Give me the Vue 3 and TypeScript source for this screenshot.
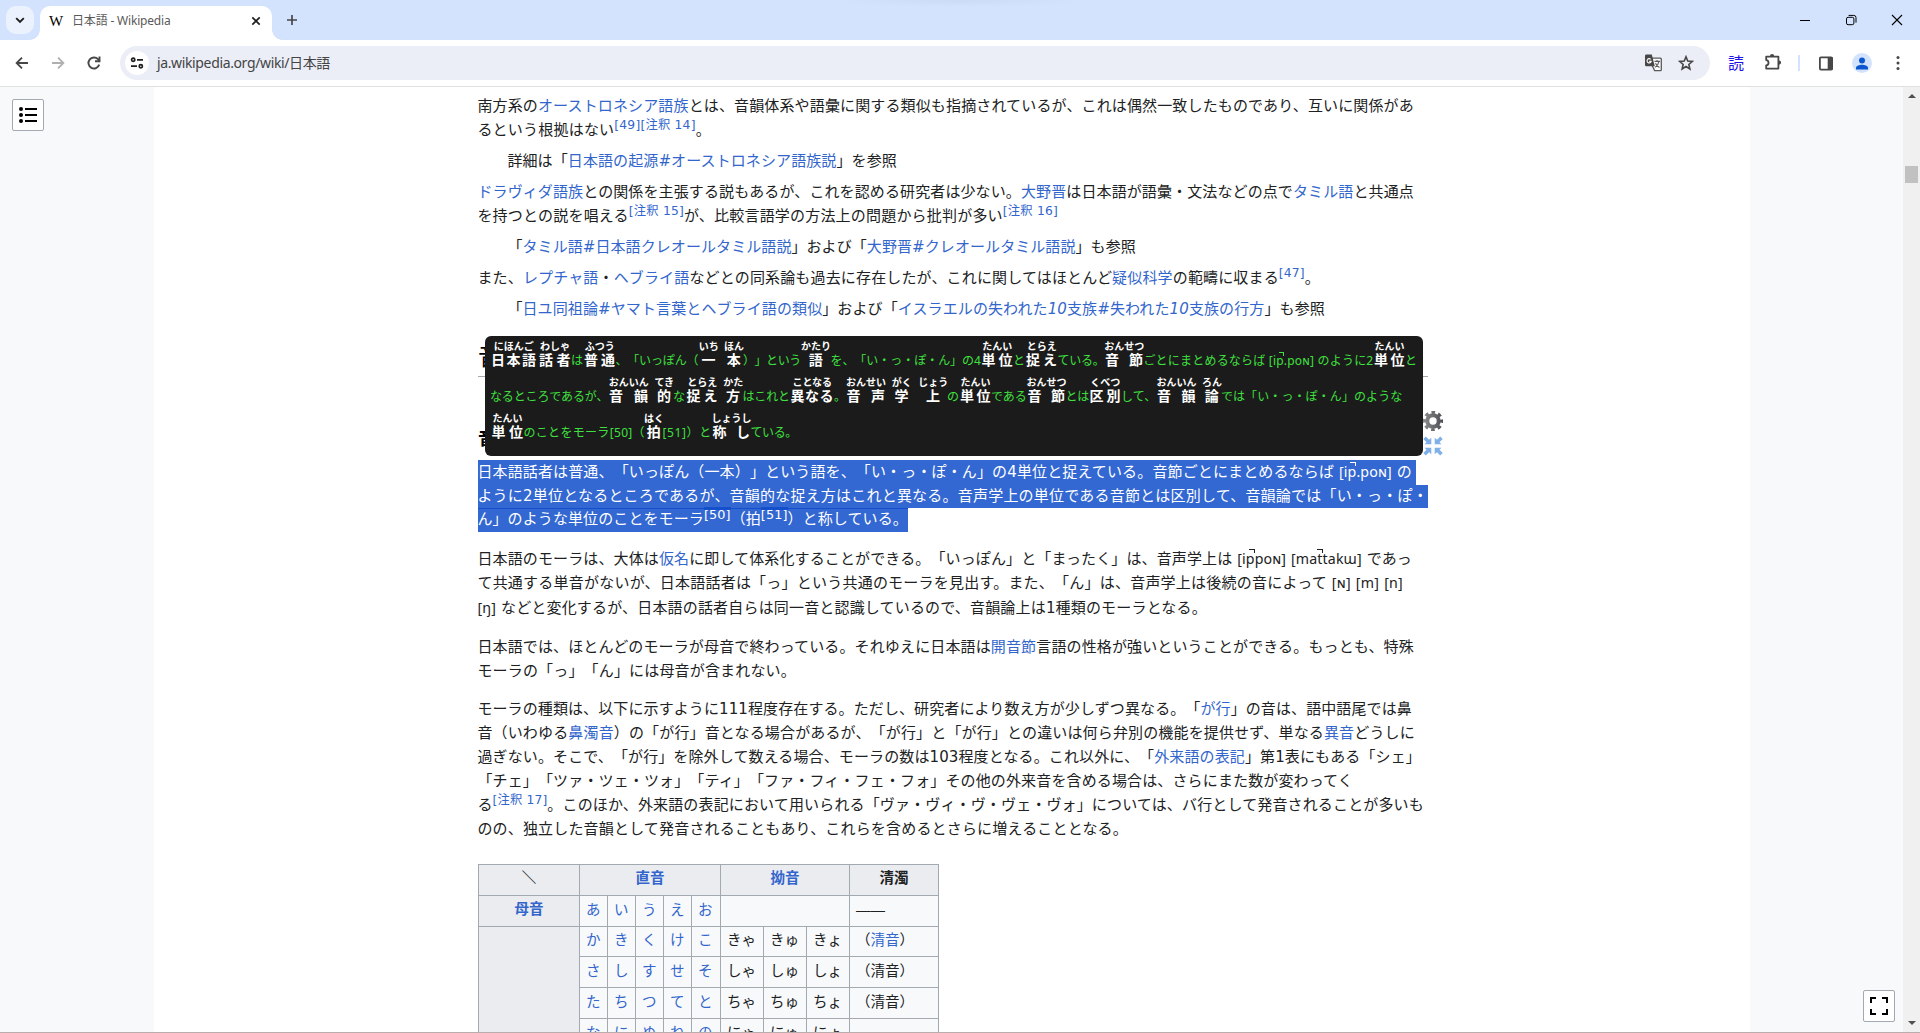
<script setup lang="ts">
import { nextTick } from 'vue'

interface Seg { kind: 'text' | 'link' | 'sup' | 'ipa'; text: string }
interface Line { w: number; segs: Seg[] }
interface Block { cls: string; lh: number; mt: number; lines: Line[] }
interface Cell { w: number; base: string; rt?: string }

/* ‹link›  ⟪superscript reference⟫  {phonetic} */
function parse(src: string): Seg[] {
  return src.split(/(‹.*?›|⟪.*?⟫|\{.*?\})/).filter(Boolean).map((t) => {
    const inner = t.slice(1, -1)
    if (t[0] === '‹') return { kind: 'link', text: inner }
    if (t[0] === '⟪') return { kind: 'sup', text: inner }
    if (t[0] === '{') return { kind: 'ipa', text: inner }
    return { kind: 'text', text: t }
  })
}
const block = (cls: string, lh: number, mt: number, ...lines: [number, string][]): Block => ({
  cls, lh, mt, lines: lines.map(([w, s]) => ({ w, segs: parse(s) })),
})
const slant = (s: string) => s.split(/([#0-9]+)/).filter(Boolean)
/* a tilde marks where the unreleased-stop corner sits over the preceding letter */
const ipa = (s: string) => s.split(/(~)/).filter(Boolean)

const upper: Block[] = [
  block('para', 24, 0,
    [936, '南方系の‹オーストロネシア語族›とは、音韻体系や語彙に関する類似も指摘されているが、これは偶然一致したものであり、互いに関係があ'],
    [233, 'るという根拠はない⟪[49]⟫⟪[注釈 14]⟫。']),
  block('hat', 24, 7, [389, '詳細は「‹日本語の起源#オーストロネシア語族説›」を参照']),
  block('para', 24, 7.4,
    [936, '‹ドラヴィダ語族›との関係を主張する説もあるが、これを認める研究者は少ない。‹大野晋›は日本語が語彙・文法などの点で‹タミル語›と共通点'],
    [580, 'を持つとの説を唱える⟪[注釈 15]⟫が、比較言語学の方法上の問題から批判が多い⟪[注釈 16]⟫']),
  block('hat', 24, 6.6, [628, '「‹タミル語#日本語クレオールタミル語説›」および「‹大野晋#クレオールタミル語説›」も参照']),
  block('para', 24, 7.2, [842, 'また、‹レプチャ語›・‹ヘブライ語›などとの同系論も過去に存在したが、これに関してはほとんど‹疑似科学›の範疇に収まる⟪[47]⟫。']),
  block('hat', 24, 7.5, [817, '「‹日ユ同祖論#ヤマト言葉とヘブライ語の類似›」および「‹イスラエルの失われた10支族#失われた10支族の行方›」も参照']),
]

const selected: { h: number; box: number; line: Line }[] = [
  { h: 25, box: 938, line: { w: 934, segs: parse('日本語話者は普通、「いっぽん（一本）」という語を、「い・っ・ぽ・ん」の4単位と捉えている。音節ごとにまとめるならば {[ip~.poɴ]} の') } },
  { h: 23, box: 950, line: { w: 950, segs: parse('ように2単位となるところであるが、音韻的な捉え方はこれと異なる。音声学上の単位である音節とは区別して、音韻論では「い・っ・ぽ・') } },
  { h: 24, box: 430, line: { w: 430, segs: parse('ん」のような単位のことをモーラ⟪[50]⟫（拍⟪[51]⟫）と称している。') } },
]

const lower: Block[] = [
  block('para', 24.85, 14.6,
    [934, '日本語のモーラは、大体は‹仮名›に即して体系化することができる。「いっぽん」と「まったく」は、音声学上は {[ip~poɴ]} {[mat~takɯ]} であっ'],
    [925, 'て共通する単音がないが、日本語話者は「っ」という共通のモーラを見出す。また、「ん」は、音声学上は後続の音によって {[ɴ]} {[m]} {[n]}'],
    [729, '{[ŋ]} などと変化するが、日本語の話者自らは同一音と認識しているので、音韻論上は1種類のモーラとなる。']),
  block('para', 24, 13.6,
    [936, '日本語では、ほとんどのモーラが母音で終わっている。それゆえに日本語は‹開音節›言語の性格が強いということができる。もっとも、特殊'],
    [318, 'モーラの「っ」「ん」には母音が含まれない。']),
  block('para', 23.88, 15.6,
    [934, 'モーラの種類は、以下に示すように111程度存在する。ただし、研究者により数え方が少しずつ異なる。「‹が行›」の音は、語中語尾では鼻'],
    [937, '音（いわゆる‹鼻濁音›）の「が行」音となる場合があるが、「が行」と「が行」との違いは何ら弁別の機能を提供せず、単なる‹異音›どうしに'],
    [943, '過ぎない。そこで、「が行」を除外して数える場合、モーラの数は103程度となる。これ以外に、「‹外来語の表記›」第1表にもある「シェ」'],
    [875, '「チェ」「ツァ・ツェ・ツォ」「ティ」「ファ・フィ・フェ・フォ」その他の外来音を含める場合は、さらにまた数が変わってく'],
    [946, 'る⟪[注釈 17]⟫。このほか、外来語の表記において用いられる「ヴァ・ヴィ・ヴ・ヴェ・ヴォ」については、バ行として発音されることが多いも'],
    [650, 'のの、独立した音韻として発音されることもあり、これらを含めるとさらに増えることとなる。']),
]

/* furigana rows: [start, end, base, reading?] measured along the row */
const row = (...c: [number, number, string, string?][]): Cell[] => {
  const out: Cell[] = []
  let x = 490.5
  for (const [a, b, base, rt] of c) {
    if (a > x) out.push({ w: a - x, base: '' })
    out.push({ w: b - a, base, rt })
    x = b
  }
  return out
}
const furigana: Cell[][] = [
  row([490.5, 537, '日本語', 'にほんご'], [538.5, 571.5, '話者', 'わしゃ'], [571.5, 583.5, 'は'], [583.5, 616, '普通', 'ふつう'],
    [616, 698.5, '、「いっぽん（'], [698.5, 719, '一', 'いち'], [724.5, 743.5, '本', 'ほん'], [743.5, 801, '）」という'],
    [801, 831, '語', 'かたり'], [831, 981, 'を、「い・っ・ぽ・ん」の4'], [981, 1013.5, '単位', 'たんい'], [1013.5, 1025.5, 'と'],
    [1025.5, 1058, '捉え', 'とらえ'], [1058, 1104.5, 'ている。'], [1104.5, 1144, '音節', 'おんせつ'],
    [1144, 1373.5, 'ごとにまとめるならば [ip~.poɴ] のように2'], [1373.5, 1405.5, '単位', 'たんい'], [1405.5, 1418, 'と']),
  row([490.5, 608.5, 'なるところであるが、'], [608.5, 649, '音韻', 'おんいん'], [655, 673.5, '的', 'てき'], [673.5, 685.5, 'な'],
    [686, 718.5, '捉え', 'とらえ'], [723.5, 743, '方', 'かた'], [743, 790, 'はこれと'], [790, 834.5, '異なる', 'ことなる'],
    [834.5, 846, '。'], [846, 886, '音声', 'おんせい'], [892, 911.5, '学', 'がく'], [919, 947.5, '上', 'じょう'], [947.5, 959.5, 'の'],
    [959.5, 991.5, '単位', 'たんい'], [991.5, 1027, 'である'], [1027, 1066, '音節', 'おんせつ'], [1066, 1089, 'とは'],
    [1089, 1121.5, '区別', 'くべつ'], [1121.5, 1156.5, 'して、'], [1156.5, 1196.5, '音韻', 'おんいん'], [1202.5, 1221.5, '論', 'ろん'],
    [1221.5, 1402.5, 'では「い・っ・ぽ・ん」のような']),
  row([491, 524, '単位', 'たんい'], [524, 645, 'のことをモーラ[50]（'], [645, 663, '拍', 'はく'], [663, 712, '[51]）と'],
    [712, 751, '称し', 'しょうし'], [751, 797, 'ている。']),
]

const kana = [
  ['かきくけこ', 'きゃ', 'きゅ', 'きょ'],
  ['さしすせそ', 'しゃ', 'しゅ', 'しょ'],
  ['たちつてと', 'ちゃ', 'ちゅ', 'ちょ'],
  ['なにぬねの', 'にゃ', 'にゅ', 'にょ'],
]
const cols = [101, 28, 28, 28, 28, 29, 43, 43, 43, 89]

/* spreads the run over its measure by adjusting the tracking */
const vFit = {
  mounted(el: HTMLElement, b: { value: number }) {
    nextTick(() => {
      const n = Array.from(el.textContent ?? '').length
      const natural = el.getBoundingClientRect().width
      if (n) el.style.letterSpacing = `${(b.value + 0.5 - natural) / n}px`
    })
  },
}
</script>

<template>
  <div class="window">
    <header class="tabs">
      <div class="search-tabs"><svg width="12" height="12" viewBox="0 0 12 12"><path d="M2.2 4.2 6 8l3.8-3.8" fill="none" stroke="#1f1f1f" stroke-width="1.9" /></svg></div>
      <div class="tab">
        <span class="fav">W</span>
        <span class="tab-title"><span v-fit="98" class="fit">日本語 - Wikipedia</span></span>
        <svg class="tab-x" width="10" height="10" viewBox="0 0 10 10"><path d="M1.3 1.3l7.4 7.4M8.7 1.3 1.3 8.7" stroke="#1f1f1f" stroke-width="1.7" /></svg>
      </div>
      <svg class="plus" width="12" height="12" viewBox="0 0 12 12"><path d="M6 1v10M1 6h10" stroke="#474747" stroke-width="1.7" /></svg>
      <div class="controls">
        <svg width="12" height="12" viewBox="0 0 12 12"><path d="M1 6.5h10" stroke="#000" /></svg>
        <svg width="12" height="12" viewBox="0 0 12 12" fill="none" stroke="#000"><rect x="1.5" y="3.3" width="7.4" height="7.4" rx="1.6" /><path d="M3.6 1.4h5.2a2.2 2.2 0 0 1 2.2 2.2v5" /></svg>
        <svg width="12" height="12" viewBox="0 0 12 12"><path d="M1 1l10 10M11 1 1 11" stroke="#000" stroke-width="1.1" /></svg>
      </div>
    </header>

    <div class="toolbar">
      <svg class="nav back" width="16" height="16" viewBox="0 0 16 16" fill="none" stroke="#474747" stroke-width="1.8"><path d="M14 8H3M8 2.6 2.6 8 8 13.4" /></svg>
      <svg class="nav fwd" width="16" height="16" viewBox="0 0 16 16" fill="none" stroke="#b0b0b0" stroke-width="1.8"><path d="M2 8h11M8 2.6 13.4 8 8 13.4" /></svg>
      <svg class="nav reload" width="16" height="16" viewBox="0 0 16 16" fill="none" stroke="#474747" stroke-width="1.9"><path d="M13.2 9.6A5.5 5.5 0 1 1 12 4.2l1.6 1.7" /><path d="M13.5 1.6v4.6H9" /></svg>
      <div class="omnibox">
        <div class="site">
          <svg width="14" height="14" viewBox="0 0 14 14" fill="none" stroke="#1f1f1f" stroke-width="1.7"><circle cx="3.2" cy="3.8" r="1.6" /><path d="M7 3.8h6M1 10.2h6" /><circle cx="10.8" cy="10.2" r="1.6" /></svg>
        </div>
        <span class="url"><span v-fit="172.5" class="fit">ja.wikipedia.org/wiki/日本語</span></span>
        <svg class="translate" width="17" height="18" viewBox="0 0 17 18"><path d="M6.8 4.200h8.600c.5 0 .9.4.9.9v10.600c0 .5-.4.9-.9.9H9.600L7.400 12" fill="#fbfbfd" stroke="#5a5a5a" stroke-width="1.300" /><path d="M1.200.6h5.600l3 11.600H1.200A1.200 1.200 0 0 1 0 11V1.800A1.200 1.200 0 0 1 1.200.6z" fill="#474747" /><path d="M5.700 5.300A2.100 2.100 0 1 0 6.200 7.400H4.200" fill="none" stroke="#fff" stroke-width="1.100" /><path d="M9.500 7.400h5.500M12 6v1.400M10.500 9.200c.8 2 2 3.400 4 4.300M14 7.400c-.6 3-2 4.800-4 6" fill="none" stroke="#5a5a5a" stroke-width="1.100" /></svg>
        <svg class="star" width="16" height="16" viewBox="0 0 16 16"><path d="M8 1.800l1.750 4.250 4.550.4-3.450 3 1.050 4.500L8 11.550 4.100 13.950l1.050-4.500-3.450-3 4.550-.4z" fill="none" stroke="#474747" stroke-width="1.600" /></svg>
      </div>
      <span class="yomi">読</span>
      <svg class="puzzle" width="18" height="18" viewBox="0 0 18 18"><path d="M2.200 3.600h12.200v12H2.200v-3.300c3.100-.2 3.100-5 0-5.200z" fill="none" stroke="#474747" stroke-width="1.800" stroke-linejoin="round" /><path d="M6 3a2.100 2.100 0 0 1 4.200 0zM15 7.500a2.100 2.100 0 0 1 0 4.200z" fill="#474747" /></svg>
      <i class="sep"></i>
      <svg class="panel" width="14" height="15" viewBox="0 0 14 15"><rect x=".9" y="1.400" width="12.200" height="12.200" rx="1" fill="#fff" stroke="#474747" stroke-width="1.800" /><path d="M8.700 1h4.800v13H8.700z" fill="#474747" /></svg>
      <div class="avatar"><svg width="12" height="13" viewBox="0 0 12 13" fill="#0b57d0"><circle cx="6" cy="3.500" r="3" /><path d="M0 12.500v-1.700C0 8.700 3.500 7.700 6 7.700s6 1 6 3.100v1.700z" /></svg></div>
      <svg class="dots" width="4" height="16" viewBox="0 0 4 16" fill="#474747"><circle cx="2" cy="2.400" r="1.500" /><circle cx="2" cy="8" r="1.500" /><circle cx="2" cy="13.600" r="1.500" /></svg>
    </div>

    <div class="page">
      <aside class="side left">
        <div class="sq"><svg width="20" height="20" viewBox="0 0 20 20"><g fill="#000"><circle cx="3" cy="4" r="2" /><circle cx="3" cy="10" r="2" /><circle cx="3" cy="16" r="2" /><path d="M7 3h12v2H7zM7 9h12v2H7zM7 15h12v2H7z" /></g></svg></div>
      </aside>

      <main class="article">
        <div v-for="(b, i) in upper" :key="'u' + i" :class="b.cls" :style="{ marginTop: b.mt + 'px', lineHeight: b.lh + 'px' }">
          <div v-for="(l, j) in b.lines" :key="j" class="line" :style="{ height: b.lh + 'px' }"><span v-fit="l.w" class="fit"><template v-for="(s, k) in l.segs" :key="k"><a v-if="s.kind === 'link' && b.cls === 'hat'"><template v-for="(t, m) in slant(s.text)" :key="m"><em v-if="/[#0-9]/.test(t)">{{ t }}</em><template v-else>{{ t }}</template></template></a><a v-else-if="s.kind === 'link'">{{ s.text }}</a><sup v-else-if="s.kind === 'sup'">{{ s.text }}</sup><template v-else>{{ s.text }}</template></template></span></div>
        </div>

        <div class="heads">
          <h2>音</h2>
          <h3>音</h3>
          <div class="popup">
            <div v-for="(r, i) in furigana" :key="i" class="furi-row">
              <div v-for="(c, j) in r" :key="j" class="cell" :class="{ word: c.rt }" :style="{ width: c.w + 'px' }">
                <span class="rt">{{ c.rt }}</span>
                <span v-if="c.rt" class="base"><b v-for="(ch, k) in c.base" :key="k">{{ ch }}</b></span>
                <span v-else class="plain"><span v-fit="c.w" class="fit"><template v-for="(p, k) in ipa(c.base)" :key="k"><i v-if="p === '~'" class="corner"></i><template v-else>{{ p }}</template></template></span></span>
              </div>
            </div>
            <div class="tools">
              <svg width="20" height="20" viewBox="0 0 20 20"><defs><linearGradient id="g" gradientUnits="userSpaceOnUse" x1="0" x2="20" y1="0" y2="0"><stop offset="0" stop-color="#8c8c8c" /><stop offset="1" stop-color="#4c4f54" /></linearGradient></defs><g stroke="url(#g)" fill="none"><circle cx="10" cy="10" r="5.700" stroke-width="4" /><path stroke-width="3.600" stroke-dasharray="3.500 3.166" stroke-dashoffset="1.750" d="M18.490 10A8.490 8.490 0 1 1 1.510 10A8.490 8.490 0 1 1 18.490 10" /></g></svg>
              <svg width="20" height="20" viewBox="0 0 20 20" fill="#7fb0ea"><g id="arr"><path d="M8.300 8.300H1.500l2-2L.3 3 2.800.6 6 3.800l2.300-2z" /></g><use href="#arr" transform="matrix(-1 0 0 1 20 0)" /><use href="#arr" transform="matrix(1 0 0 -1 0 20)" /><use href="#arr" transform="matrix(-1 0 0 -1 20 20)" /></svg>
            </div>
          </div>
        </div>

        <div class="selection">
          <div v-for="(s, i) in selected" :key="i" class="sel" :style="{ height: s.h + 'px', width: s.box + 'px' }"><span v-fit="s.line.w" class="fit"><template v-for="(g, k) in s.line.segs" :key="k"><sup v-if="g.kind === 'sup'">{{ g.text }}</sup><span v-else-if="g.kind === 'ipa'" class="ipa"><template v-for="(p, m) in ipa(g.text)" :key="m"><i v-if="p === '~'" class="corner"></i><template v-else>{{ p }}</template></template></span><template v-else>{{ g.text }}</template></template></span></div>
        </div>

        <div v-for="(b, i) in lower" :key="'l' + i" :class="b.cls" :style="{ marginTop: b.mt + 'px', lineHeight: b.lh + 'px' }">
          <div v-for="(l, j) in b.lines" :key="j" class="line" :style="{ height: b.lh + 'px' }"><span v-fit="l.w" class="fit"><template v-for="(s, k) in l.segs" :key="k"><a v-if="s.kind === 'link'">{{ s.text }}</a><sup v-else-if="s.kind === 'sup'">{{ s.text }}</sup><span v-else-if="s.kind === 'ipa'" class="ipa"><template v-for="(p, m) in ipa(s.text)" :key="m"><i v-if="p === '~'" class="corner"></i><template v-else>{{ p }}</template></template></span><template v-else>{{ s.text }}</template></template></span></div>
        </div>

        <table>
          <colgroup><col v-for="(w, i) in cols" :key="i" :style="{ width: w + 'px' }" /></colgroup>
          <tbody>
            <tr class="r31"><th>＼</th><th colspan="5"><a>直音</a></th><th colspan="3"><a>拗音</a></th><th>清濁</th></tr>
            <tr class="r31"><th><a>母音</a></th><td v-for="c in 'あいうえお'" :key="c"><a>{{ c }}</a></td><td colspan="3"></td><td class="dash">――</td></tr>
            <tr v-for="(k, i) in kana" :key="i" :class="i ? 'r31' : 'r30'">
              <th v-if="i === 0" rowspan="4"></th>
              <td v-for="c in k[0]" :key="c"><a>{{ c }}</a></td>
              <td>{{ k[1] }}</td><td>{{ k[2] }}</td><td>{{ k[3] }}</td>
              <td><template v-if="i === 0">（<a>清音</a>）</template><template v-else-if="i < 3">（清音）</template></td>
            </tr>
          </tbody>
        </table>
      </main>

      <aside class="side right">
        <div class="sq"><svg width="20" height="20" viewBox="0 0 20 20"><path d="M1 1h6v2H3v4H1zM19 1v6h-2V3h-4V1zM1 19v-6h2v4h4v2zM19 19h-6v-2h4v-4h2z" /></svg></div>
      </aside>
      <div class="scroll">
        <i class="up"></i><i class="thumb"></i><i class="down"></i>
      </div>
    </div>
  </div>
</template>

<style>
html, body { overflow: hidden; background: #fff; }
</style>

<style scoped>
* { box-sizing: border-box; }
.window { width: 1920px; height: 1033px; display: flex; flex-direction: column; overflow: hidden; background: #fff; border-bottom: 1px solid #b9adad; font-family: "DejaVu Sans", "Noto Sans CJK JP", sans-serif; text-spacing-trim: space-all; color: #202122; }
.fit { display: inline-block; white-space: pre; }
svg { display: block; flex: none; }

.tabs { height: 40px; flex: none; background: radial-gradient(ellipse 125px 7px at 960px 0, #cbdaf5, #d3e3fd) #d3e3fd; display: flex; align-items: flex-start; }
.search-tabs { width: 28px; height: 28px; margin: 6px 0 0 6px; border-radius: 10px; background: #ebf2fe; display: flex; align-items: center; justify-content: center; }
.tab { position: relative; width: 232px; height: 34px; margin: 6px 0 0 6px; background: #fff; border-radius: 10px 10px 0 0; display: flex; align-items: center; padding-left: 9px; }
.tab::before, .tab::after { content: ""; position: absolute; bottom: 0; width: 10px; height: 10px; }
.tab::before { left: -10px; background: radial-gradient(circle at 0 0, transparent 9.500px, #fff 10px); }
.tab::after { right: -10px; background: radial-gradient(circle at 100% 0, transparent 9.500px, #fff 10px); }
.fav { width: 15px; font: 400 15px/20px "Liberation Serif", serif; color: #000; margin-top: -5px; }
.tab-title { margin: -4px 0 0 8px; width: 179px; font: 12px/20px "Noto Sans", "Noto Sans CJK JP", sans-serif; color: #5a5a5a; }
.tab-x { margin-top: -5px; }
.plus { margin: 14px 0 0 14px; }
.controls { margin: 14px 17px 0 auto; display: flex; gap: 34px; }

.toolbar { height: 47px; flex: none; background: #fff; border-bottom: 1px solid #dfe1de; display: flex; align-items: center; border-radius: 9px 9px 0 0; box-shadow: 0 -10px 0 -9px #d3e3fd; }
.toolbar > * { flex: none; }
.back { margin: -1px 0 0 14px; }
.fwd { margin: -1px 0 0 20px; }
.reload { margin: -1px 0 0 20px; }
.omnibox { width: 1590px; height: 34px; margin: 0 0 0 18px; border-radius: 17px; background: #ebeef7; display: flex; align-items: center; padding-left: 5px; }
.site { width: 24px; height: 24px; border-radius: 50%; background: #fff; display: flex; align-items: center; justify-content: center; }
.url { margin-left: 8px; font: 14px/20px "Noto Sans", "Noto Sans CJK JP", sans-serif; color: #444; }
.translate { margin-left: auto; }
.star { margin: 0 16px 0 16px; }
.yomi { margin-left: 18px; width: 17px; font: 400 16px/20px "Noto Sans CJK JP", sans-serif; color: #1d12e8; margin-top: -2px; }
.puzzle { margin-left: 19px; margin-top: -2px; }
.sep { width: 2px; height: 16px; margin-left: 16px; background: #d3e3fd; }
.panel { margin-left: 19px; }
.avatar { width: 20px; height: 20px; margin-left: 19px; border-radius: 50%; background: #d3e3fd; display: flex; align-items: center; justify-content: center; }
.dots { margin-left: 24px; }

.page { flex: 1; min-height: 0; display: flex; }
.side { background: #f8f9fb; flex: none; }
.left { width: 154px; padding: 12px; }
.right { width: 153px; display: flex; align-items: flex-end; justify-content: flex-end; padding: 0 8px 10px 0; }
.sq { width: 32px; height: 32px; border: 1px solid #a2a9b1; border-radius: 2px; background: #fff; display: flex; align-items: center; justify-content: center; }
.article { width: 1596px; padding: 6.700px 0 0 324px; font-size: 15px; overflow: hidden; }
.article .fit { margin-left: -.6px; }
.scroll { width: 17px; background: #f0f0f0; display: flex; flex-direction: column; align-items: center; }
.up, .down { border: 4px solid transparent; border-top: 0; border-bottom: 4px solid #505050; margin-top: 7px; }
.thumb { width: 13px; height: 17px; margin-top: 68px; background: #c1c1c1; }
.down { border-bottom: 0; border-top: 4px solid #505050; margin: auto 0 7px; }

.line { white-space: nowrap; }
.hat { padding-left: 30px; }
a { color: #3366cc; }
em { font-style: italic; }
sup { font-size: 12.300px; line-height: 1; vertical-align: baseline; position: relative; top: -6px; color: #3366cc; }
.ipa { font-family: "Noto Sans", sans-serif; font-size: 14.200px; }
.corner { display: inline-block; position: relative; width: 0; height: 0; }
.corner::before { content: ""; position: absolute; left: -6px; bottom: 11px; width: 5px; height: 3px; border-top: 1px solid currentColor; border-right: 1px solid currentColor; }
.plain .corner::before { bottom: 9px; left: -5px; width: 4px; }

.heads { position: relative; height: 138.300px; width: 950px; margin-top: .300px; }
h2 { margin: 0; height: 55px; padding-top: 16px; font: 400 24px/34px "Noto Sans CJK JP", sans-serif; border-bottom: 1px solid #a2a9b1; color: #000; }
h3 { margin: 47px 0 0; font: 700 18px/26px "Noto Sans CJK JP", sans-serif; color: #000; }
.popup { position: absolute; left: 7px; top: 14.300px; width: 938px; height: 120px; border-radius: 6px; background: #1b1b1b; padding: 4px 0 0 5.500px; }
.furi-row { display: flex; height: 36px; }
.cell { flex: none; display: flex; flex-direction: column; color: #3fe03f; }
.rt { height: 12px; font-size: 10px; line-height: 13px; font-weight: 700; color: #fff; align-self: center; white-space: nowrap; }
.base { display: flex; justify-content: space-between; padding: 0 1px 0 .5px; color: #fff; font-size: 14px; line-height: 16px; }
.base b:only-child { margin: 0 auto; }
.plain { font-size: 12px; line-height: 17px; font-family: "Noto Sans", "Noto Sans CJK JP", sans-serif; }
.tools { position: absolute; left: 938px; top: 75px; display: flex; flex-direction: column; gap: 5px; }

.selection { color: #fff; }
.sel { background: #3367d1; line-height: 23px; white-space: nowrap; }
.sel:last-child { border-top: 1px solid #1450cb; line-height: 21px; }
.sel sup { color: #fff; font-size: 12.800px; top: -5px; z-index: 1; }
.sel sup::before { content: ""; position: absolute; z-index: -1; left: 0; right: 0; top: 0; height: 3px; background: #1450cb; }

table { margin-top: 22.300px; width: 461px; table-layout: fixed; border-collapse: collapse; background: #f8f9fb; }
th, td { border: 1px solid #a2a9b1; padding: 0 0 3px 6px; font-size: 14.500px; line-height: 20px; text-align: left; white-space: nowrap; vertical-align: middle; }
td { padding-bottom: 2px; }
th { background: #eaecf0; text-align: center; padding-left: 0; }
.r31 { height: 31px; }
.r30 { height: 30px; }
</style>
